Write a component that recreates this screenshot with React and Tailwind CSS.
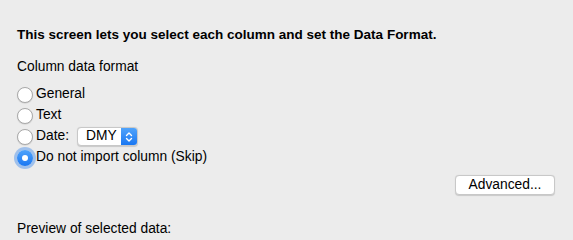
import React, { useState } from "react";

const Radio = ({ checked, label, onClick, children }) => (
  <div className="flex items-center h-[21px]" onClick={onClick}>
    {checked ? (
      <span className="w-[16px] h-[16px] shrink-0 rounded-full bg-gradient-to-b from-[#4fa3fb] to-[#1877f2] flex items-center justify-center shadow-[0_0_0_3px_rgba(94,156,236,0.55)]">
        <span className="w-[6px] h-[6px] rounded-full bg-white" />
      </span>
    ) : (
      <span className="w-[16px] h-[16px] shrink-0 rounded-full bg-white border border-[#a9a9a9] shadow-[0_0.5px_1px_rgba(0,0,0,0.15)]" />
    )}
    <span className="ml-[3px] text-[13.8px] text-black">{label}</span>
    {children}
  </div>
);

export default function App() {
  const [format, setFormat] = useState("skip");

  return (
    <div
      className="w-[573px] h-[240px] bg-[#ececec] overflow-hidden pl-[17px] pt-[27px]"
      style={{ fontFamily: "'Liberation Sans', Arial, sans-serif" }}
    >
      <h1 className="text-[13.5px] font-bold text-black leading-[16px]">
        This screen lets you select each column and set the Data Format.
      </h1>

      <p className="mt-[16px] text-[13.8px] text-black leading-[16px]">Column data format</p>

      <div className="mt-[9px] flex flex-col">
        <Radio label="General" checked={format === "general"} onClick={() => setFormat("general")} />
        <Radio label="Text" checked={format === "text"} onClick={() => setFormat("text")} />
        <Radio label="Date:" checked={format === "date"} onClick={() => setFormat("date")}>
          <div className="ml-[8px] flex items-center h-[19px] w-[61px] rounded-[4px] bg-white border border-[#c8c8c8] shadow-[0_0.5px_1px_rgba(0,0,0,0.15)] overflow-hidden">
            <span className="flex-1 pl-[8px] text-[13.8px] text-black">DMY</span>
            <span className="w-[16px] h-full bg-gradient-to-b from-[#4fa3fb] to-[#1877f2] flex items-center justify-center">
              <svg width="8" height="12" viewBox="0 0 8 12" fill="none" stroke="white" strokeWidth="1.4" strokeLinecap="round" strokeLinejoin="round">
                <path d="M1.5 4.5 L4 2 L6.5 4.5" />
                <path d="M1.5 7.5 L4 10 L6.5 7.5" />
              </svg>
            </span>
          </div>
        </Radio>
        <Radio label="Do not import column (Skip)" checked={format === "skip"} onClick={() => setFormat("skip")} />
      </div>

      <div className="flex justify-end pr-[18px] mt-[7px]">
        <button className="h-[20px] w-[100px] rounded-[4px] bg-white border border-[#c8c8c8] shadow-[0_0.5px_1px_rgba(0,0,0,0.15)] text-[13.8px] text-black leading-none">
          Advanced...
        </button>
      </div>

      <p className="mt-[26px] text-[13.8px] text-black leading-[16px]">Preview of selected data:</p>
    </div>
  );
}
